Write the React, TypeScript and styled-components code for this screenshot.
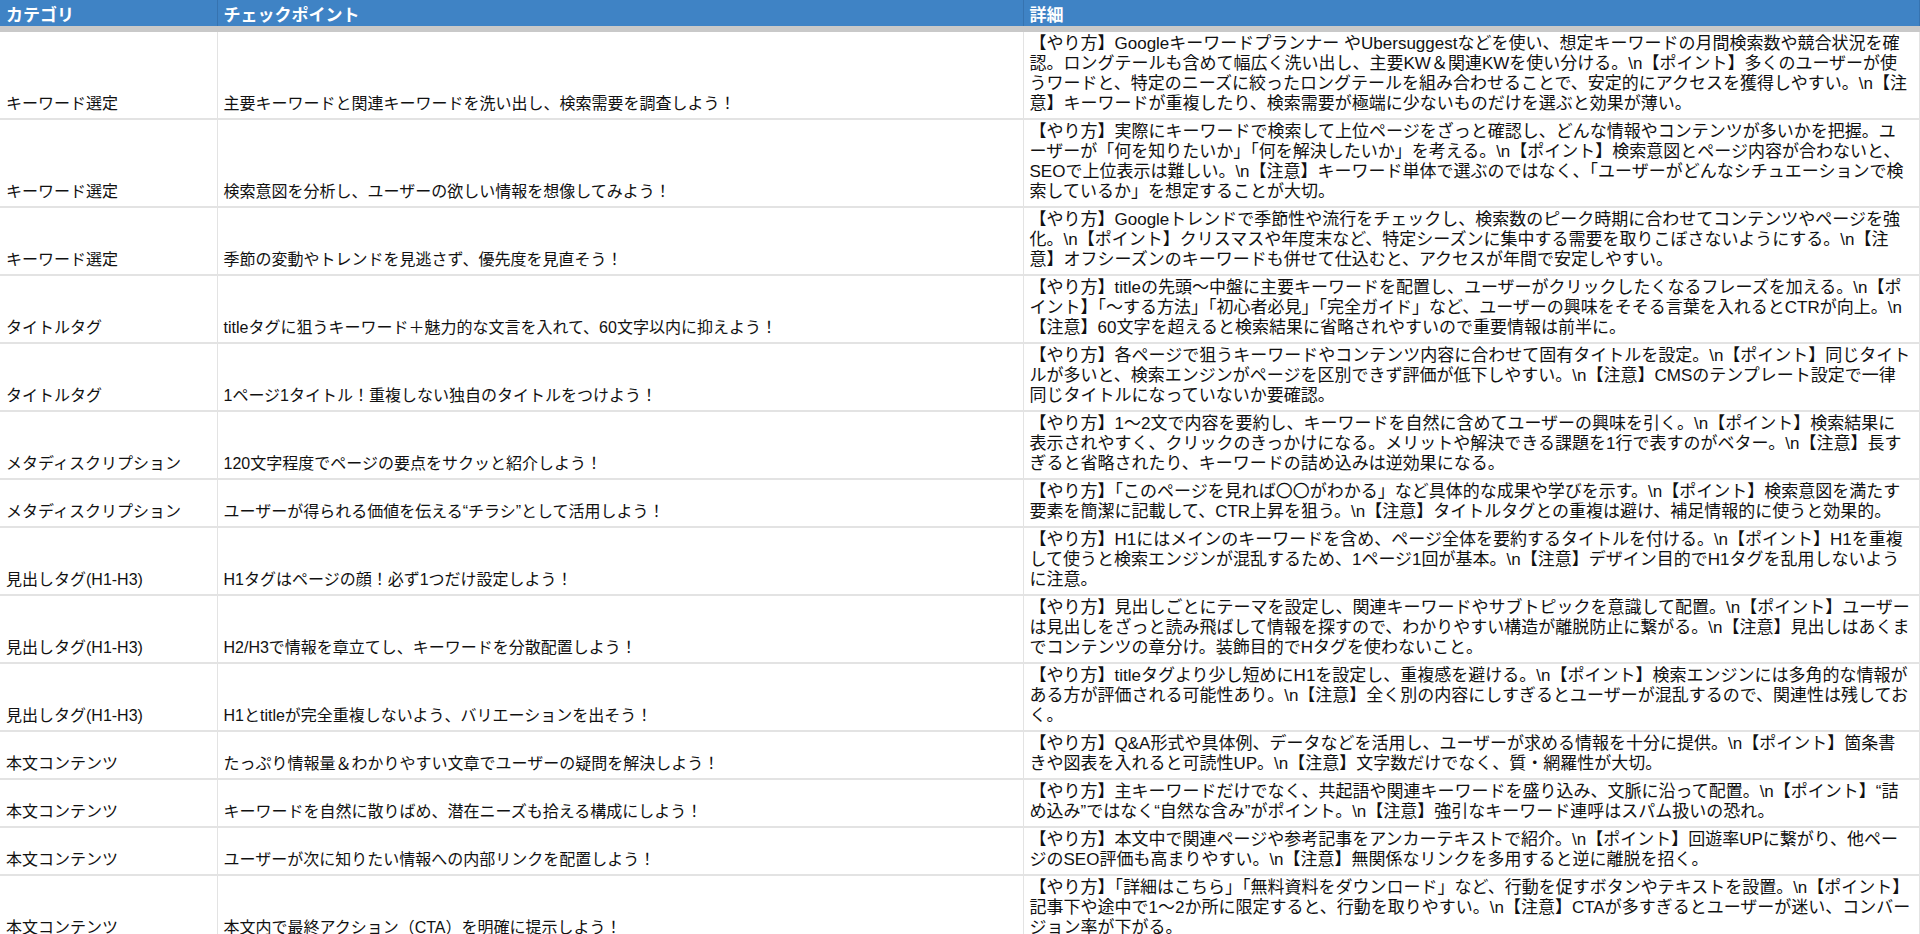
import React from "react";
import styled, { createGlobalStyle } from "styled-components";

const Global = createGlobalStyle`
  html, body { margin: 0; padding: 0; background: #fff; }
  body { font-family: "Liberation Sans", "Noto Sans CJK JP", sans-serif; color: #111; }
`;

const Table = styled.table`
  width: 1920px;
  border-collapse: collapse;
  table-layout: fixed;
`;

const HeadCell = styled.th`
  background: #3f83c5;
  color: #fff;
  font-size: 17px;
  font-weight: bold;
  text-align: left;
  padding: 0 6px;
  height: 29px;
  border-right: 1px solid #3673b0;
  border-bottom: 6px solid #c9c9c9;
  box-sizing: border-box;
`;

const Cell = styled.td<{ $detail?: boolean }>`
  font-size: ${(p) => (p.$detail ? "17px" : "16px")};
  line-height: 20px;
  vertical-align: ${(p) => (p.$detail ? "top" : "bottom")};
  padding: ${(p) => (p.$detail ? "2px 8px 4px 6px" : "2px 6px 4px 6px")};
  border-right: 1px solid #e3e3e3;
  border-bottom: 2px solid #e3e3e3;
  word-break: break-all;
`;

const rows: [string, string, string][] = [
  ["キーワード選定", "主要キーワードと関連キーワードを洗い出し、検索需要を調査しよう！", "【やり方】Googleキーワードプランナー やUbersuggestなどを使い、想定キーワードの月間検索数や競合状況を確認。ロングテールも含めて幅広く洗い出し、主要KW＆関連KWを使い分ける。\\n【ポイント】多くのユーザーが使うワードと、特定のニーズに絞ったロングテールを組み合わせることで、安定的にアクセスを獲得しやすい。\\n【注意】キーワードが重複したり、検索需要が極端に少ないものだけを選ぶと効果が薄い。"],
  ["キーワード選定", "検索意図を分析し、ユーザーの欲しい情報を想像してみよう！", "【やり方】実際にキーワードで検索して上位ページをざっと確認し、どんな情報やコンテンツが多いかを把握。ユーザーが「何を知りたいか」「何を解決したいか」を考える。\\n【ポイント】検索意図とページ内容が合わないと、SEOで上位表示は難しい。\\n【注意】キーワード単体で選ぶのではなく、「ユーザーがどんなシチュエーションで検索しているか」を想定することが大切。"],
  ["キーワード選定", "季節の変動やトレンドを見逃さず、優先度を見直そう！", "【やり方】Googleトレンドで季節性や流行をチェックし、検索数のピーク時期に合わせてコンテンツやページを強化。\\n【ポイント】クリスマスや年度末など、特定シーズンに集中する需要を取りこぼさないようにする。\\n【注意】オフシーズンのキーワードも併せて仕込むと、アクセスが年間で安定しやすい。"],
  ["タイトルタグ", "titleタグに狙うキーワード＋魅力的な文言を入れて、60文字以内に抑えよう！", "【やり方】titleの先頭〜中盤に主要キーワードを配置し、ユーザーがクリックしたくなるフレーズを加える。\\n【ポイント】「〜する方法」「初心者必見」「完全ガイド」など、ユーザーの興味をそそる言葉を入れるとCTRが向上。\\n【注意】60文字を超えると検索結果に省略されやすいので重要情報は前半に。"],
  ["タイトルタグ", "1ページ1タイトル！重複しない独自のタイトルをつけよう！", "【やり方】各ページで狙うキーワードやコンテンツ内容に合わせて固有タイトルを設定。\\n【ポイント】同じタイトルが多いと、検索エンジンがページを区別できず評価が低下しやすい。\\n【注意】CMSのテンプレート設定で一律同じタイトルになっていないか要確認。"],
  ["メタディスクリプション", "120文字程度でページの要点をサクッと紹介しよう！", "【やり方】1〜2文で内容を要約し、キーワードを自然に含めてユーザーの興味を引く。\\n【ポイント】検索結果に表示されやすく、クリックのきっかけになる。メリットや解決できる課題を1行で表すのがベター。\\n【注意】長すぎると省略されたり、キーワードの詰め込みは逆効果になる。"],
  ["メタディスクリプション", "ユーザーが得られる価値を伝える“チラシ”として活用しよう！", "【やり方】「このページを見れば〇〇がわかる」など具体的な成果や学びを示す。\\n【ポイント】検索意図を満たす要素を簡潔に記載して、CTR上昇を狙う。\\n【注意】タイトルタグとの重複は避け、補足情報的に使うと効果的。"],
  ["見出しタグ(H1-H3)", "H1タグはページの顔！必ず1つだけ設定しよう！", "【やり方】H1にはメインのキーワードを含め、ページ全体を要約するタイトルを付ける。\\n【ポイント】H1を重複して使うと検索エンジンが混乱するため、1ページ1回が基本。\\n【注意】デザイン目的でH1タグを乱用しないように注意。"],
  ["見出しタグ(H1-H3)", "H2/H3で情報を章立てし、キーワードを分散配置しよう！", "【やり方】見出しごとにテーマを設定し、関連キーワードやサブトピックを意識して配置。\\n【ポイント】ユーザーは見出しをざっと読み飛ばして情報を探すので、わかりやすい構造が離脱防止に繋がる。\\n【注意】見出しはあくまでコンテンツの章分け。装飾目的でHタグを使わないこと。"],
  ["見出しタグ(H1-H3)", "H1とtitleが完全重複しないよう、バリエーションを出そう！", "【やり方】titleタグより少し短めにH1を設定し、重複感を避ける。\\n【ポイント】検索エンジンには多角的な情報がある方が評価される可能性あり。\\n【注意】全く別の内容にしすぎるとユーザーが混乱するので、関連性は残しておく。"],
  ["本文コンテンツ", "たっぷり情報量＆わかりやすい文章でユーザーの疑問を解決しよう！", "【やり方】Q&A形式や具体例、データなどを活用し、ユーザーが求める情報を十分に提供。\\n【ポイント】箇条書きや図表を入れると可読性UP。\\n【注意】文字数だけでなく、質・網羅性が大切。"],
  ["本文コンテンツ", "キーワードを自然に散りばめ、潜在ニーズも拾える構成にしよう！", "【やり方】主キーワードだけでなく、共起語や関連キーワードを盛り込み、文脈に沿って配置。\\n【ポイント】“詰め込み”ではなく“自然な含み”がポイント。\\n【注意】強引なキーワード連呼はスパム扱いの恐れ。"],
  ["本文コンテンツ", "ユーザーが次に知りたい情報への内部リンクを配置しよう！", "【やり方】本文中で関連ページや参考記事をアンカーテキストで紹介。\\n【ポイント】回遊率UPに繋がり、他ページのSEO評価も高まりやすい。\\n【注意】無関係なリンクを多用すると逆に離脱を招く。"],
  ["本文コンテンツ", "本文内で最終アクション（CTA）を明確に提示しよう！", "【やり方】「詳細はこちら」「無料資料をダウンロード」など、行動を促すボタンやテキストを設置。\\n【ポイント】記事下や途中で1〜2か所に限定すると、行動を取りやすい。\\n【注意】CTAが多すぎるとユーザーが迷い、コンバージョン率が下がる。"],
];

export default function App() {
  return (
    <>
      <Global />
      <Table>
        <colgroup>
          <col style={{ width: 217 }} />
          <col style={{ width: 806 }} />
          <col />
        </colgroup>
        <thead>
          <tr>
            <HeadCell>カテゴリ</HeadCell>
            <HeadCell>チェックポイント</HeadCell>
            <HeadCell>詳細</HeadCell>
          </tr>
        </thead>
        <tbody>
          {rows.map((r, i) => (
            <tr key={i}>
              <Cell>{r[0]}</Cell>
              <Cell>{r[1]}</Cell>
              <Cell $detail>{r[2]}</Cell>
            </tr>
          ))}
        </tbody>
      </Table>
    </>
  );
}
